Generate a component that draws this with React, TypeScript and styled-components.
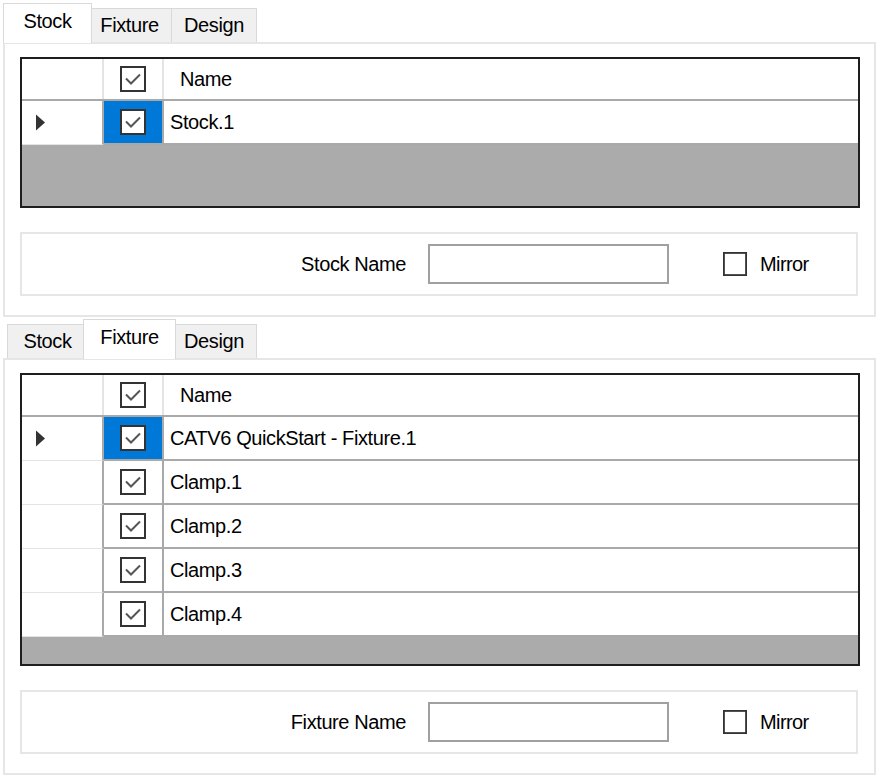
import styled, { createGlobalStyle, css } from 'styled-components';

const GlobalStyle = createGlobalStyle`
    body {
      margin: 0;
      background: #ffffff;
      font-family: "Liberation Sans", Arial, sans-serif;
      color: #000000;
    }
`;

const Page = styled.div`
    padding-top: 3px;
    width: 879px;
`;

const Section = styled.section<{ $gap?: number }>`
    margin-top: ${p => p.$gap ?? 0}px;
`;

const TabStrip = styled.div`
    display: flex;
    align-items: flex-end;
    height: 39px;
    padding-left: 8px;
    position: relative;
    z-index: 1;
`;

const Tab = styled.div<{ $width: number; $active?: boolean }>`
    box-sizing: border-box;
    width: ${p => p.$width}px;
    height: 34px;
    display: flex;
    align-items: center;
    justify-content: center;
    font-size: 20px;
    letter-spacing: -0.4px;
    background: #f0f0f0;
    border: 1px solid #d9d9d9;
    border-bottom: none;
    margin-left: -1px;
    ${p => p.$active && css`
      width: ${p.$width + 8}px;
      height: 40px;
      margin: 0 -4px -1px -5px;
      padding-bottom: 5px;
      background: #ffffff;
      position: relative;
      z-index: 2;
    `}
`;

const Panel = styled.div<{ $bottom: number }>`
    box-sizing: border-box;
    width: 873px;
    margin-left: 3px;
    border: 2px solid #e6e6e6;
    padding: 13px 14px ${p => p.$bottom}px 15px;
`;

const Grid = styled.div`
    width: 840px;
    box-sizing: border-box;
    border: 2px solid #1e1e1e;
    display: flex;
    flex-direction: column;
`;

const Row = styled.div<{ $header?: boolean }>`
    display: flex;
    height: ${p => (p.$header ? 42 : 44)}px;
    box-sizing: border-box;
    background: #ffffff;
    ${p => p.$header && css`border-bottom: 2px solid #a9a9a9;`}
`;

const RowHeaderCell = styled.div<{ $header?: boolean }>`
    box-sizing: border-box;
    width: 82px;
    flex: none;
    display: flex;
    align-items: center;
    padding-left: 13px;
    border-right: 2px solid ${p => (p.$header ? '#e4e4e4' : '#a9a9a9')};
    ${p => !p.$header && css`border-bottom: 1px solid #e4e4e4;`}
`;

const CheckCell = styled.div<{ $header?: boolean; $selected?: boolean }>`
    box-sizing: border-box;
    width: 60px;
    flex: none;
    display: flex;
    align-items: center;
    justify-content: center;
    background: ${p => (p.$selected ? '#0078d7' : '#ffffff')};
    border-right: 2px solid ${p => (p.$header ? '#e4e4e4' : '#a9a9a9')};
    ${p => !p.$header && css`border-bottom: 2px solid #a9a9a9;`}
`;

const NameCell = styled.div<{ $header?: boolean }>`
    box-sizing: border-box;
    flex: 1;
    display: flex;
    align-items: center;
    font-size: 20px;
    letter-spacing: -0.4px;
    padding-left: ${p => (p.$header ? 16 : 6)}px;
    ${p => !p.$header && css`border-bottom: 2px solid #a9a9a9;`}
`;

const Filler = styled.div<{ $height: number }>`
    height: ${p => p.$height}px;
    background: #ababab;
`;

const SettingsBox = styled.div<{ $gap: number }>`
    box-sizing: border-box;
    width: 838px;
    height: 64px;
    margin-top: ${p => p.$gap}px;
    border: 2px solid #e6e6e6;
    display: flex;
    align-items: center;
`;

const FieldLabel = styled.label`
    width: 384px;
    text-align: right;
    font-size: 20px;
    letter-spacing: -0.4px;
`;

const TextInput = styled.input`
    box-sizing: border-box;
    width: 241px;
    height: 40px;
    margin-left: 22px;
    border: 2px solid #a0a0a0;
    background: #ffffff;
    outline: none;
`;

const MirrorBox = styled.div`
    display: flex;
    align-items: center;
    margin-left: 54px;
    gap: 13px;
    font-size: 20px;
    letter-spacing: -0.6px;
`;

function CheckBox({ size, checked }: { size: number; checked?: boolean }) {
    return (
        <svg width={size} height={size} viewBox="0 0 26 26">
            <rect x="1" y="1" width="24" height="24" fill="#ffffff" stroke="#333333" strokeWidth="2" />
            {checked && (
                <path d="M6 12.5 L11 17.5 L20 8.5" fill="none" stroke="#555555" strokeWidth="2" />
            )}
        </svg>
    );
}

function RowMarker() {
    return (
        <svg width="11" height="17" viewBox="0 0 11 17">
            <path d="M1 0.5 L10 8.5 L1 16.5 Z" fill="#333333" />
        </svg>
    );
}

type Item = { name: string };

function ItemGrid({ items, filler }: { items: Item[]; filler: number }) {
    return (
        <Grid>
            <Row $header>
                <RowHeaderCell $header />
                <CheckCell $header><CheckBox size={26} checked /></CheckCell>
                <NameCell $header>Name</NameCell>
            </Row>
            {items.map((item, i) => (
                <Row key={item.name}>
                    <RowHeaderCell>{i === 0 && <RowMarker />}</RowHeaderCell>
                    <CheckCell $selected={i === 0}><CheckBox size={26} checked /></CheckCell>
                    <NameCell>{item.name}</NameCell>
                </Row>
            ))}
            <Filler $height={filler} />
        </Grid>
    );
}

function TabPage({ active, label, items, filler, gap }: {
    active: number; label: string; items: Item[]; filler: number; gap?: number;
}) {
    const tabs = [
        { title: 'Stock', width: 81 },
        { title: 'Fixture', width: 85 },
        { title: 'Design', width: 86 },
    ];
    return (
        <Section $gap={gap}>
            <TabStrip>
                {tabs.map((t, i) => (
                    <Tab key={t.title} $width={t.width} $active={i === active}>{t.title}</Tab>
                ))}
            </TabStrip>
            <Panel $bottom={19}>
                <ItemGrid items={items} filler={filler} />
                <SettingsBox $gap={24}>
                    <FieldLabel>{label}</FieldLabel>
                    <TextInput />
                    <MirrorBox>
                        <CheckBox size={24} />
                        Mirror
                    </MirrorBox>
                </SettingsBox>
            </Panel>
        </Section>
    );
}

export default function App() {
    return (
        <Page>
            <GlobalStyle />
            <TabPage active={0} label="Stock Name" items={[{ name: 'Stock.1' }]} filler={61} />
            <TabPage
                active={1}
                label="Fixture Name"
                gap={2}
                filler={27}
                items={[
                    { name: 'CATV6 QuickStart - Fixture.1' },
                    { name: 'Clamp.1' },
                    { name: 'Clamp.2' },
                    { name: 'Clamp.3' },
                    { name: 'Clamp.4' },
                ]}
            />
        </Page>
    );
}
